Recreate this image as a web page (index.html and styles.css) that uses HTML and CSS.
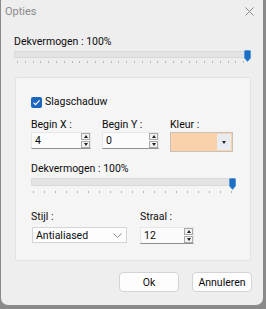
FILE: index.html
```html
<!DOCTYPE html>
<html>
<head>
<meta charset="utf-8">
<title>Opties</title>
<link rel="stylesheet" href="styles.css">
</head>
<body>

<div class="dialog">
	<div class="titlebar">
		<span class="title">Opties</span>
		<svg class="close" width="9" height="9" viewBox="0 0 9 9"><path d="M0.5 0.5 L8.5 8.5 M8.5 0.5 L0.5 8.5" stroke="#8c8c8c" stroke-width="1" fill="none"/></svg>
	</div>

	<div class="main">
		<div class="lbl top-lbl">Dekvermogen : 100%</div>
		<div class="slider wide">
			<div class="track"></div>
			<svg class="thumb" width="7" height="12" viewBox="0 0 7 12"><path d="M0.5 1.5 Q0.5 0.5 1.5 0.5 H5.5 Q6.5 0.5 6.5 1.5 V8 L3.5 11.5 L0.5 8 Z" fill="#1b6ec4" stroke="#5b9ad8" stroke-width="1"/></svg>
			<div class="ticks fine"></div>
		</div>

		<div class="panel">
			<div class="check-row">
				<span class="checkbox"><svg width="11" height="11" viewBox="0 0 11 11"><path d="M2.5 5.6 L4.5 7.6 L8.6 3.4" stroke="#fff" stroke-width="1.2" fill="none"/></svg></span>
				<span class="lbl">Slagschaduw</span>
			</div>

			<div class="fields">
				<div class="field fx">
					<div class="lbl">Begin X :</div>
					<div class="spin">
						<span class="val">4</span>
						<span class="arrows"><span class="up"></span><span class="down"></span></span>
					</div>
				</div>
				<div class="field fy">
					<div class="lbl">Begin Y :</div>
					<div class="spin">
						<span class="val">0</span>
						<span class="arrows"><span class="up"></span><span class="down"></span></span>
					</div>
				</div>
				<div class="field fc">
					<div class="lbl">Kleur :</div>
					<div class="colorbox">
						<span class="swatch"></span>
						<span class="drop"><span class="tri"></span></span>
					</div>
				</div>
			</div>

			<div class="lbl mid-lbl">Dekvermogen : 100%</div>
			<div class="slider narrow">
				<div class="track"></div>
				<svg class="thumb" width="7" height="12" viewBox="0 0 7 12"><path d="M0.5 1.5 Q0.5 0.5 1.5 0.5 H5.5 Q6.5 0.5 6.5 1.5 V8 L3.5 11.5 L0.5 8 Z" fill="#1b6ec4" stroke="#5b9ad8" stroke-width="1"/></svg>
				<div class="ticks coarse"></div>
			</div>

			<div class="fields low">
				<div class="field fs">
					<div class="lbl">Stijl :</div>
					<div class="select">
						<span class="val">Antialiased</span>
						<svg width="9" height="5" viewBox="0 0 9 5"><path d="M0.5 0.5 L4.5 4.5 L8.5 0.5" stroke="#8a8a8a" stroke-width="1" fill="none"/></svg>
					</div>
				</div>
				<div class="field fr">
					<div class="lbl">Straal :</div>
					<div class="spin">
						<span class="val">12</span>
						<span class="arrows"><span class="up"></span><span class="down"></span></span>
					</div>
				</div>
			</div>
		</div>
	</div>

	<div class="buttons">
		<button type="button" class="btn">Ok</button>
		<button type="button" class="btn">Annuleren</button>
	</div>
</div>

</body>
</html>
```

FILE: styles.css
```css
html, body {
	margin: 0;
	padding: 0;
}
body {
	width: 266px;
	height: 309px;
	background-color: #8a8a8a;
	font-family: Roboto, "Noto Sans", sans-serif;
	font-size: 10.5px;
	color: #0c0c0c;
	overflow: hidden;
}
.dialog {
	box-sizing: border-box;
	width: 262px;
	height: 305px;
	margin-left: 1px;
	background-color: #eeeeee;
	border-radius: 0 0 7px 7px;
	display: flex;
	flex-direction: column;
}
.titlebar {
	height: 25px;
	display: flex;
	align-items: center;
	justify-content: space-between;
	padding: 0 9px 0 4px;
}
.title {
	color: #8a8a8a;
	font-size: 11px;
	margin-top: -2px;
}
.close {
	margin-top: -3px;
}
.main {
	padding: 0 12px 0 13px;
}
.lbl {
	line-height: 16px;
	white-space: nowrap;
}
.top-lbl {
	margin-top: 9px;
}

/* sliders */
.slider {
	position: relative;
}
.slider .track {
	height: 5px;
	margin-top: 1px;
	background-color: #e3e3e3;
	border: 1px solid #d9d9d9;
	border-radius: 1px;
}
.slider .thumb {
	position: absolute;
	top: -1px;
	right: 0;
}
.ticks {
	height: 2px;
	margin-top: 3px;
}
.ticks.fine {
	background: repeating-linear-gradient(to right, #b5b5b5 0 1px, transparent 1px 7.8px);
	margin-left: 3px;
	margin-right: 2px;
}
.ticks.coarse {
	background: repeating-linear-gradient(to right, #b5b5b5 0 1px, transparent 1px 11px);
	margin-left: 2px;
	margin-right: 2px;
}
.slider.narrow {
	width: 205px;
}
.slider.narrow .track {
	height: 6px;
}
.slider.narrow .thumb {
	top: 0;
}
.slider.narrow .ticks {
	margin-top: 5px;
}

/* group panel */
.panel {
	box-sizing: border-box;
	margin-top: 14px;
	margin-left: 1px;
	width: 236px;
	height: 184px;
	background-color: #f5f5f5;
	border: 1px solid #e2e2e2;
	border-radius: 2px;
	padding: 16px 0 0 15px;
}
.check-row {
	display: flex;
	align-items: center;
	gap: 3px;
}
.checkbox {
	width: 11px;
	height: 11px;
	background-color: #1b66be;
	border-radius: 2px;
	display: flex;
}
.fields {
	display: flex;
	gap: 11px;
	margin-top: 7px;
}
.fields.low {
	gap: 13px;
	margin-top: 16px;
}
.field .lbl {
	margin-bottom: -1px;
}
.fields.low .lbl {
	margin-bottom: 2px;
}
.spin {
	box-sizing: border-box;
	height: 17px;
	display: flex;
	align-items: center;
	justify-content: space-between;
	background-color: #fbfbfb;
	border: 1px solid #e6e6e6;
	border-bottom-color: #8f8f8f;
	padding-left: 3px;
}
.fx .spin { width: 60px; }
.fy .spin { width: 57px; }
.fr .spin { width: 54px; }
.arrows {
	display: flex;
	flex-direction: column;
	gap: 1px;
}
.arrows span {
	position: relative;
	width: 9px;
	height: 7px;
	background-color: #f2f2f2;
	border: 1px solid #a9a9a9;
	box-sizing: border-box;
}
.arrows span::after {
	content: "";
	position: absolute;
	left: 2px;
	top: 1px;
	border-left: 2px solid transparent;
	border-right: 2px solid transparent;
}
.arrows .up::after {
	border-bottom: 3px solid #222;
}
.arrows .down::after {
	border-top: 3px solid #222;
}
.colorbox {
	box-sizing: border-box;
	width: 63px;
	height: 20px;
	margin-top: -1px;
	display: flex;
	border: 1px solid #c9c0b6;
	background-color: #f8d3ac;
	padding: 1px;
}
.swatch {
	flex: 1;
	background-color: #f9d2ab;
}
.drop {
	width: 14px;
	background-color: #e8ebef;
	display: flex;
	align-items: center;
	justify-content: center;
}
.tri {
	border-left: 2.5px solid transparent;
	border-right: 2.5px solid transparent;
	border-top: 3px solid #222;
}
.mid-lbl {
	margin-top: 9px;
}
.select {
	box-sizing: border-box;
	width: 95px;
	height: 16px;
	display: flex;
	align-items: center;
	justify-content: space-between;
	background-color: #fdfdfd;
	border: 1px solid #d5d5d5;
	padding: 0 4px 0 3px;
	margin-left: 1px;
}

/* bottom buttons */
.buttons {
	display: flex;
	justify-content: flex-end;
	gap: 13px;
	padding: 11px 11px 0 0;
}
.btn {
	width: 60px;
	height: 20px;
	padding: 0;
	font-family: inherit;
	font-size: 10.5px;
	color: #0c0c0c;
	background-color: #fdfdfd;
	border: 1px solid #d3d3d3;
	border-radius: 4px;
}
```
